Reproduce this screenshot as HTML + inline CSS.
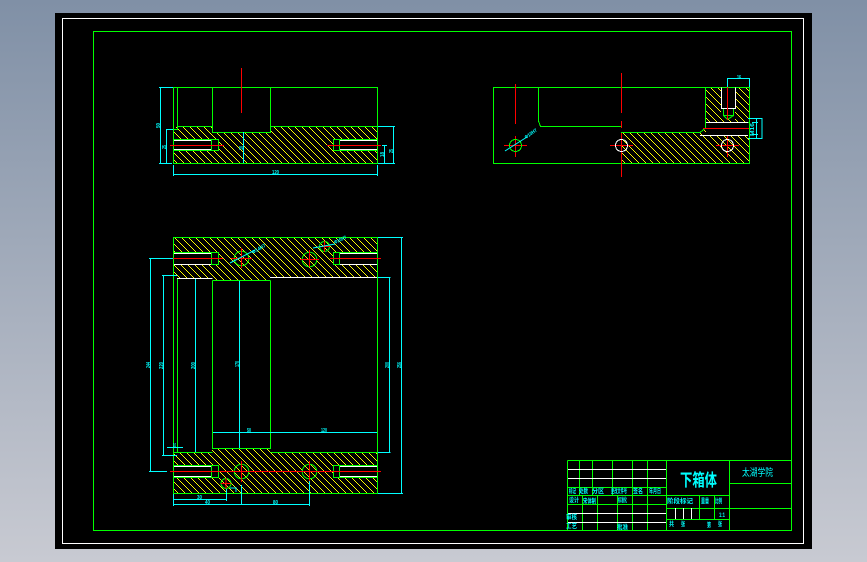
<!DOCTYPE html>
<html><head><meta charset="utf-8"><style>
html,body{margin:0;padding:0;width:867px;height:562px;overflow:hidden;background:linear-gradient(#8090a6,#c8cad2)}
svg{position:absolute;left:0;top:0}
text{font-family:"Liberation Sans","Noto Sans CJK SC",sans-serif;fill:#00ffff}
.g{stroke:#00ff00;fill:none}.c{stroke:#00ffff;fill:none}.r{stroke:#ff0000;fill:none}.w{stroke:#fff;fill:none}
</style></head><body>
<svg width="867" height="562" viewBox="0 0 867 562" xmlns="http://www.w3.org/2000/svg">
<defs><pattern id="h" patternUnits="userSpaceOnUse" width="7" height="7">
<rect x="0" y="0" width="1" height="1" fill="#ff0"/><rect x="1" y="1" width="1" height="1" fill="#ff0"/><rect x="2" y="2" width="1" height="1" fill="#ff0"/><rect x="3" y="3" width="1" height="1" fill="#ff0"/><rect x="4" y="4" width="1" height="1" fill="#ff0"/><rect x="5" y="5" width="1" height="1" fill="#ff0"/><rect x="6" y="6" width="1" height="1" fill="#ff0"/>
</pattern></defs>
<rect x="55" y="13" width="757" height="536" fill="#000"/>
<g shape-rendering="crispEdges">
<path fill="url(#h)" d="M173 127H212V132H270V127H378V164H173Z"/>
<path fill="url(#h)" d="M621 133H700L705 128V87H749V164H621Z"/>
<path fill="url(#h)" d="M173 237H378V277H270V280H212V278H173Z"/>
<path fill="url(#h)" d="M173 452H212V448H270V452H378V493H173Z"/>
<rect x="174" y="140" width="44" height="11" fill="#000"/><rect x="333" y="140" width="44" height="11" fill="#000"/>
<rect x="706" y="123" width="43" height="12" fill="#000"/>
<rect x="721" y="87" width="14" height="32" fill="#000"/>
<rect x="174" y="253" width="44" height="12" fill="#000"/><rect x="333" y="253" width="44" height="12" fill="#000"/>
<rect x="174" y="466" width="44" height="11" fill="#000"/><rect x="333" y="466" width="44" height="11" fill="#000"/>
<rect x="62.5" y="18.5" width="741" height="525" class="w"/>
<rect x="93.5" y="31.5" width="698" height="499" class="g"/>
<!-- top-left view -->
<path class="g" d="M173.500 87.500H377.500V163.500H173.500ZM177.500 87.500V129.500H173.500M177.500 126.500H212.500M270.500 126.500H377.500M212.500 87.500V132.500H270.500V87.500M173.500 139.500H211.500V150.500H173.500M211.500 139.500H218.500V150.500H211.500M377.500 139.500H339.500V150.500H377.500M339.500 139.500H333.500V150.500H339.500"/>
<path class="w" d="M174 140.500H211M174 149.500H211M377 140.500H340M377 149.500H340"/>
<path class="r" d="M170 145.500H224M327 145.500H381M241.500 68V113"/>
<path class="c" d="M159 87.500H173M160.500 87V163M159 163.500H172M166.500 129.500V163M166 129.500H173M243.500 132V163M378 126.500H395M393.500 127V163M378 163.500H395M384.500 145.500V163M382 145.500H387M173.500 165V176M377.500 165V176M173 174.500H378"/>
<!-- top-right view -->
<path class="g" d="M493.500 87.500H749.500V163.500H493.500ZM538.500 87.500V121L540.500 126.500H621M621 132.500H700L705.500 128V87.500M705.500 122.500H749M723.500 108.500V115.500H733.500V108.500ZM723.500 115.500L727.500 119.500L733.500 115.500"/>
<path class="w" d="M721.500 87.500V108.500H735.500V87.500M700 135.500H748M706 122.500H748"/>
<path class="r" d="M621.500 73V113M621.500 121V128M621.500 133V177M515.500 84V124M515.500 136V157M504 145.500H527M610 145.500H633M716 145.500H739M727.500 136V157M727.500 87V120M703 128.500H749"/>
<circle cx="515.500" cy="145.500" r="6" class="g"/><circle cx="621.500" cy="145.500" r="6" class="w"/><circle cx="727.500" cy="145.500" r="6" class="w"/>
<path class="c" d="M727.500 79V87M749.500 79V87M727 78.500H750M748 118.500H762V138.500H748M752 122.500H758M752 134.500H758M756.500 119V138"/>
</g>
<path class="c" d="M505 151L527 137"/>
<g shape-rendering="crispEdges">
<!-- plan view -->
<path class="g" d="M173.500 237.500H377.500V493.500H173.500ZM177.500 278V452M212.500 280.500V448.500H270.500V280.500M212.500 280.500H270.500M173.500 452.500H212.500M270.500 452.500H377.500M212.500 448.500H270.500"/>
<path class="w" d="M177 278.500H212.500M270 277.500H377"/>
<path class="g" d="M173.500 252.500H211.500V264.500H173.500M211.500 252.500H218.500V264.500H211.500M377.500 252.500H339.500V264.500H377.500M339.500 252.500H333.500V264.500H339.500M173.500 465.500H211.500V477.500H173.500M211.500 465.500H218.500V477.500H211.500M377.500 465.500H339.500V477.500H377.500M339.500 465.500H333.500V477.500H339.500"/>
<path class="w" d="M174 253.500H211M174 264.500H211M377 253.500H340M377 264.500H340M174 466.500H211M174 476.500H211M377 466.500H340M377 476.500H340"/>
</g>
<circle cx="241.500" cy="258.500" r="7.300" class="g"/><circle cx="309.500" cy="259.500" r="7.300" class="g"/><circle cx="324.500" cy="246.500" r="5" class="g"/>
<circle cx="241.500" cy="471.500" r="7.300" class="g"/><circle cx="309.500" cy="471.500" r="7.300" class="g"/><circle cx="226" cy="483.500" r="5" class="g"/>
<g shape-rendering="crispEdges">
<path class="r" d="M169 258.500H223M330 258.500H381M241.500 248V268M231 258.500H252M309.500 250V267M300 259.500H319M324.500 241V252M319 246.500H330M170 471.500H381M241.500 461V482M309.500 461V482M226 478V489M221 483.500H231"/>
<path class="c" d="M378 237.500H403M401.500 238V493M378 493.500H403M378 277.500H390.500M389.500 278V452M378 452.500H390.500M150.500 259V471M149 258.500H173M149 471.500H167M163.500 276V455M162 275.500H177M162 455.500H177M195.500 279V452M239.500 281V448M213 432.500H377M167 447.500H183M173.500 494V506M226.500 489V501M241.500 485V505M309.500 481V506M173 499.500H227M173 504.500H310"/>
<path class="c" d="M230 488H236V492"/>
<!-- title block -->
<path class="g" d="M567.500 460.500H791M567.500 460.500V530M579.500 460.500V495M592.500 460.500V495M612.500 460.500V495M632.500 460.500V530M647.500 460.500V530M666.500 460.500V530M729.500 460.500V530M582.500 495V530M597.500 495V530M617.500 495V530M567 487.500H666M567 495.500H729M567 504.500H666M729 483.500H791M666 508.500H791M666 519.500H729M699.500 495V519M714.500 495V519"/>
<path class="w" d="M568 469.500H666M568 478.500H666M568 513.500H666M568 522.500H666M675.500 508V519M683.500 508V519M691.500 508V519"/>
</g>
<path class="c" d="M230 263L255 250M313 248L335 244"/>
<g font-size="5" font-weight="bold" lengthAdjust="spacingAndGlyphs">
<text x="526" y="139" textLength="14" lengthAdjust="spacingAndGlyphs" transform="rotate(-35 526 139)">Φ10H7</text>
<text x="253" y="254" textLength="15" lengthAdjust="spacingAndGlyphs" transform="rotate(-30 253 254)">Φ14H7</text>
<text x="335" y="244" textLength="13" lengthAdjust="spacingAndGlyphs" transform="rotate(-25 335 244)">Φ10H7</text>
<text x="160" y="128" textLength="5" lengthAdjust="spacingAndGlyphs" transform="rotate(-90 160 128)">50</text>
<text x="166" y="149" textLength="4" lengthAdjust="spacingAndGlyphs" transform="rotate(-90 166 149)">25</text>
<text x="243" y="150" textLength="4" lengthAdjust="spacingAndGlyphs" transform="rotate(-90 243 150)">10</text>
<text x="384" y="157" textLength="5" lengthAdjust="spacingAndGlyphs" transform="rotate(-90 384 157)">18</text>
<text x="393" y="153" textLength="4" lengthAdjust="spacingAndGlyphs" transform="rotate(-90 393 153)">25</text>
<text x="272" y="174" textLength="7" lengthAdjust="spacingAndGlyphs">120</text>
<text x="737" y="79" textLength="4" lengthAdjust="spacingAndGlyphs">16</text>
<text x="754" y="136" textLength="13" lengthAdjust="spacingAndGlyphs" transform="rotate(-90 754 136)">M16</text>
<text x="150" y="368" textLength="6" lengthAdjust="spacingAndGlyphs" transform="rotate(-90 150 368)">244</text>
<text x="163" y="369" textLength="7" lengthAdjust="spacingAndGlyphs" transform="rotate(-90 163 369)">220</text>
<text x="195" y="369" textLength="7" lengthAdjust="spacingAndGlyphs" transform="rotate(-90 195 369)">200</text>
<text x="239" y="367" textLength="6" lengthAdjust="spacingAndGlyphs" transform="rotate(-90 239 367)">170</text>
<text x="389" y="368" textLength="6" lengthAdjust="spacingAndGlyphs" transform="rotate(-90 389 368)">200</text>
<text x="401" y="368" textLength="6" lengthAdjust="spacingAndGlyphs" transform="rotate(-90 401 368)">256</text>
<text x="247" y="432" textLength="4" lengthAdjust="spacingAndGlyphs">50</text>
<text x="321" y="432" textLength="6" lengthAdjust="spacingAndGlyphs">120</text>
<text x="173" y="447" textLength="3" lengthAdjust="spacingAndGlyphs">10</text>
<text x="197" y="499" textLength="5" lengthAdjust="spacingAndGlyphs">30</text>
<text x="205" y="504" textLength="5" lengthAdjust="spacingAndGlyphs">40</text>
<text x="273" y="504" textLength="5" lengthAdjust="spacingAndGlyphs">80</text>
</g>
<text x="680" y="486" font-size="17" font-weight="bold" textLength="37" lengthAdjust="spacingAndGlyphs">下箱体</text>
<text x="742" y="476" font-size="10" textLength="31" lengthAdjust="spacingAndGlyphs">太湖学院</text>
<g font-size="6.500" font-weight="bold">
<text x="569" y="493" textLength="7" lengthAdjust="spacingAndGlyphs">标记</text>
<text x="579" y="493" textLength="9" lengthAdjust="spacingAndGlyphs">处数</text>
<text x="592" y="493" textLength="12" lengthAdjust="spacingAndGlyphs">分区</text>
<text x="611" y="493" textLength="16" lengthAdjust="spacingAndGlyphs">更改文件号</text>
<text x="633" y="493" textLength="10" lengthAdjust="spacingAndGlyphs">签名</text>
<text x="649" y="493" textLength="12" lengthAdjust="spacingAndGlyphs">年月日</text>
<text x="569" y="502" textLength="10" lengthAdjust="spacingAndGlyphs">设计</text>
<text x="583" y="503" textLength="13" lengthAdjust="spacingAndGlyphs">宋体制</text>
<text x="618" y="502" textLength="9" lengthAdjust="spacingAndGlyphs">标准化</text>
<text x="566" y="519" textLength="11" lengthAdjust="spacingAndGlyphs">审核</text>
<text x="566" y="528" textLength="11" lengthAdjust="spacingAndGlyphs">工艺</text>
<text x="617" y="529" textLength="11" lengthAdjust="spacingAndGlyphs">批准</text>
<text x="667" y="503" textLength="26" lengthAdjust="spacingAndGlyphs">阶段标记</text>
<text x="701" y="503" textLength="8" lengthAdjust="spacingAndGlyphs">重量</text>
<text x="715" y="503" textLength="7" lengthAdjust="spacingAndGlyphs">比例</text>
<text x="719" y="517" textLength="6" lengthAdjust="spacingAndGlyphs">1:1</text>
<text x="669" y="526" textLength="5" lengthAdjust="spacingAndGlyphs">共</text>
<text x="681" y="526" textLength="4" lengthAdjust="spacingAndGlyphs">张</text>
<text x="707" y="527" textLength="4" lengthAdjust="spacingAndGlyphs">第</text>
<text x="718" y="526" textLength="4" lengthAdjust="spacingAndGlyphs">张</text>
</g>
</svg>
</body></html>
